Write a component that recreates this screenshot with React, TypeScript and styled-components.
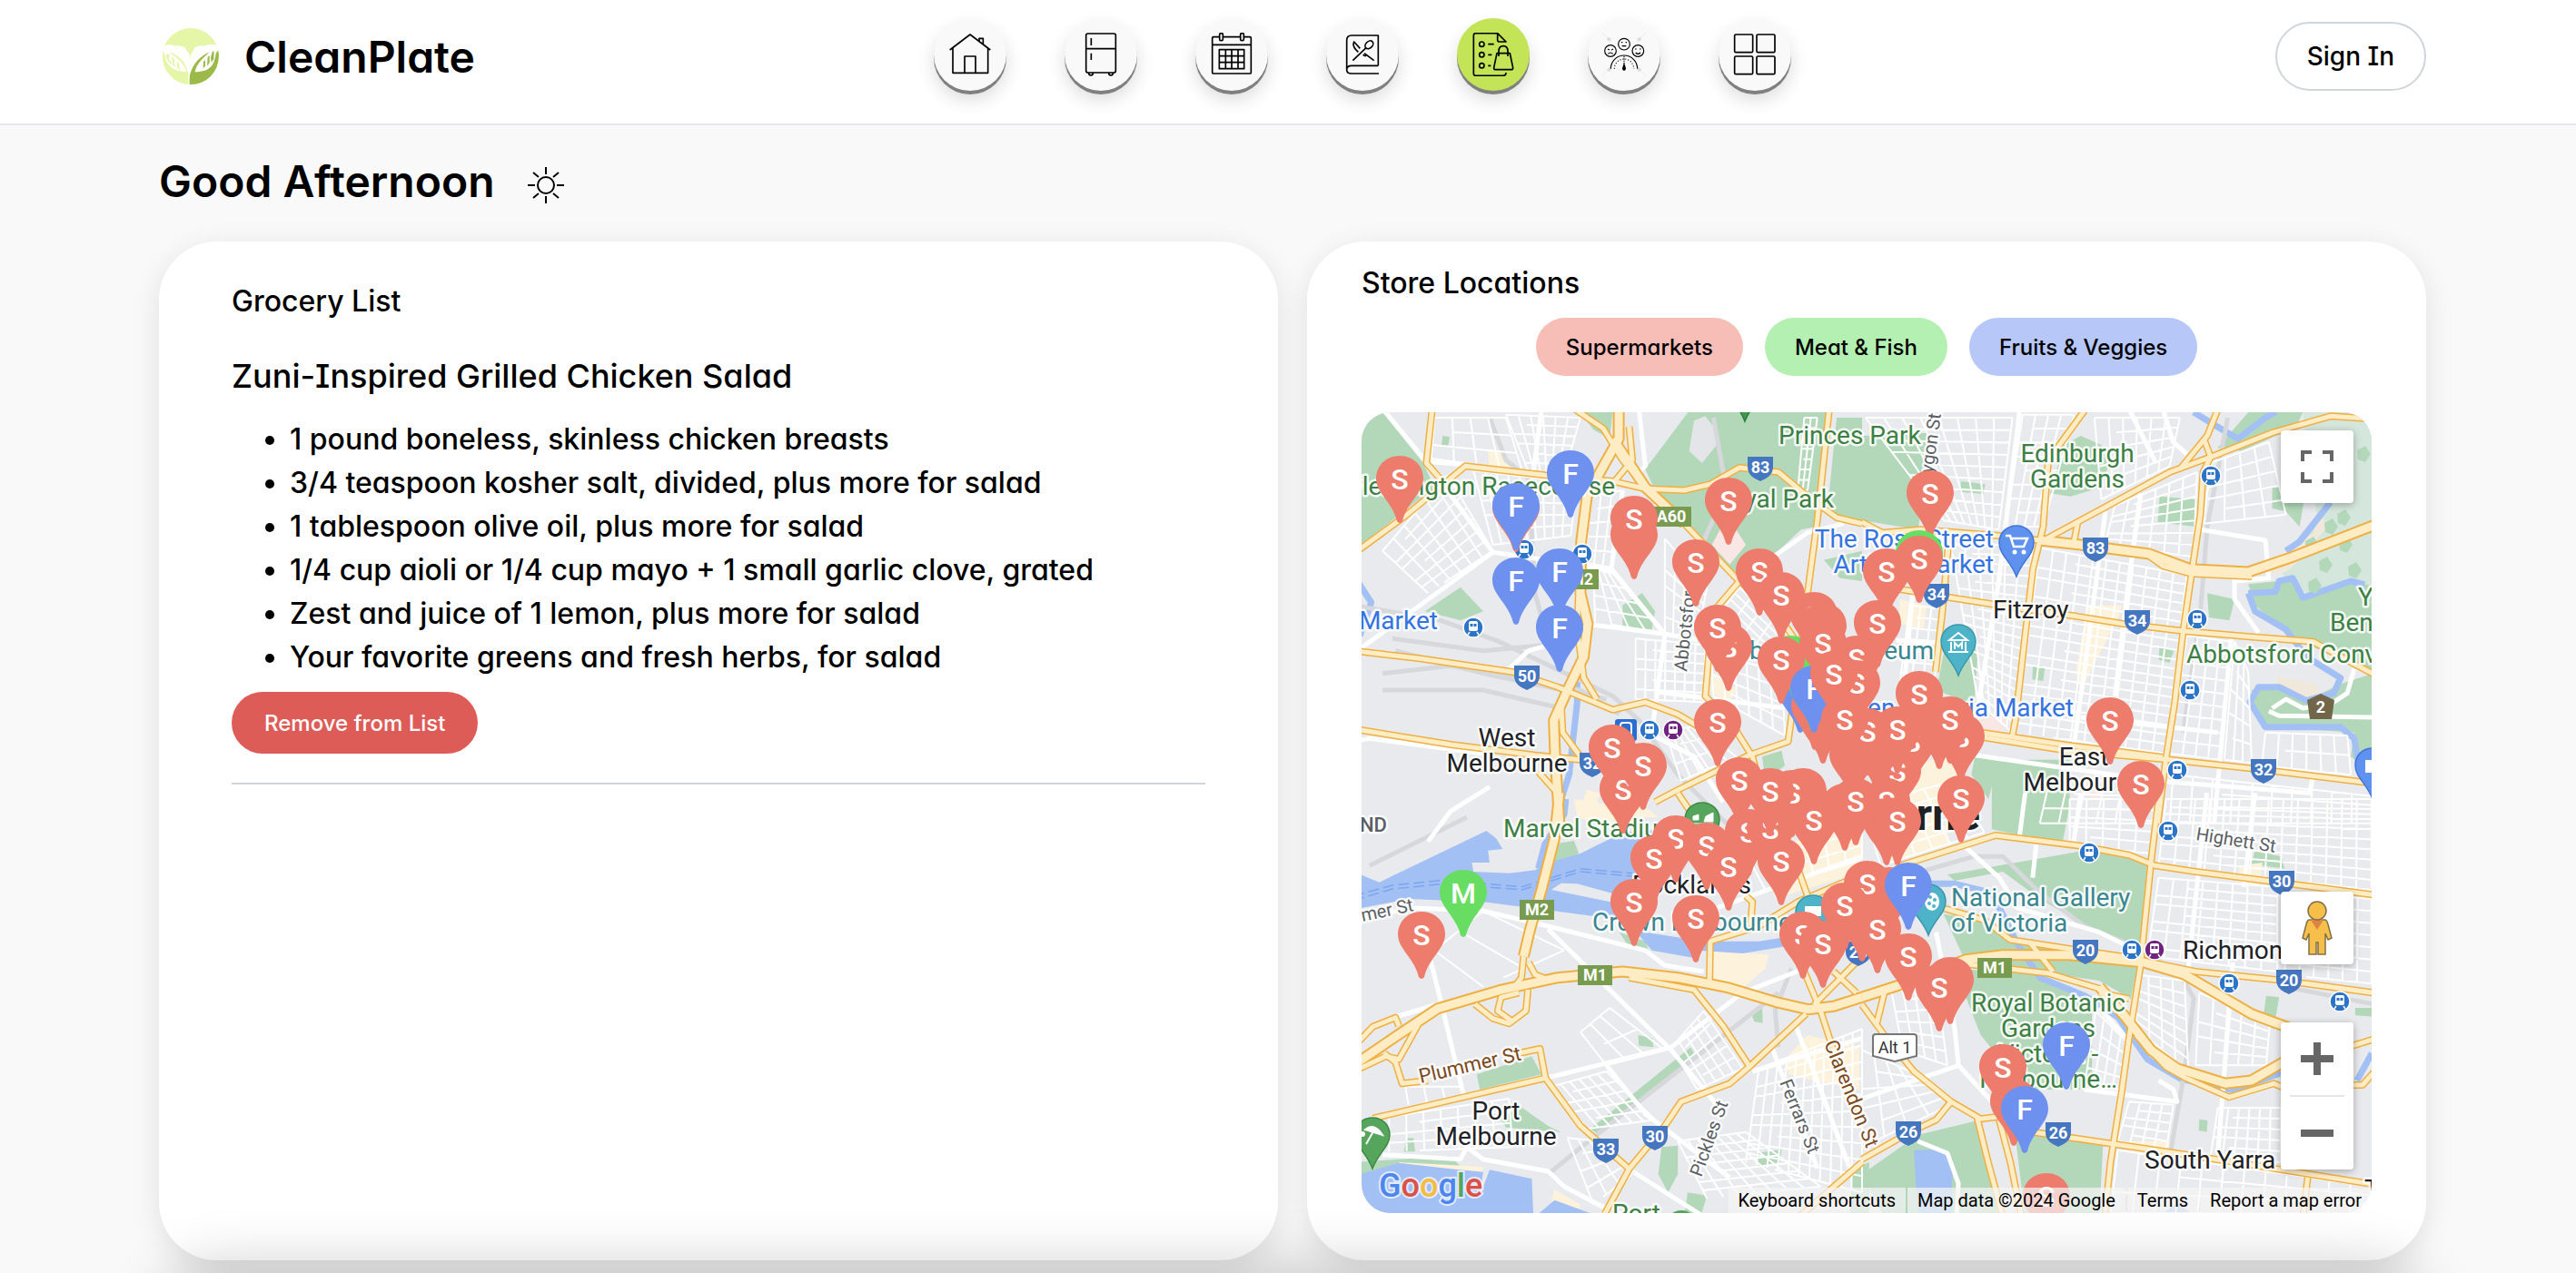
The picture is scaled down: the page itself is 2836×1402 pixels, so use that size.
import React from "react";
import styled, { createGlobalStyle } from "styled-components";

const GlobalStyle = createGlobalStyle`
  *, *::before, *::after { box-sizing: border-box; }
  body {
    margin: 0;
    background: #f9f9f9;
    color: #000;
    font-family: Inter, "Open Sans", sans-serif;
    font-feature-settings: "cv11", "cv08";
    font-weight: 500;
  }
  h1, h2, h3, ul { margin: 0; padding: 0; font-weight: 500; }
  button { font: inherit; font-feature-settings: inherit; color: inherit; cursor: pointer; border: 0; padding: 0; }
  a { color: inherit; text-decoration: none; }
`;

/* ---------- page frame ---------- */

const Header = styled.header`
  display: flex;
  align-items: flex-end;
  justify-content: space-between;
  padding: 20px 165px 36px 175px;
  background: #fff;
  border-bottom: 2px solid #e5e7eb;
`;

const Brand = styled.a`
  display: flex;
  flex: 0 0 320px;
  min-width: 0;
  align-items: center;
  gap: 28px;
  height: 76px;
  padding-left: 4px;
  font-size: 48px;
  font-weight: 600;
  white-space: nowrap;

  svg { flex: none; }
`;

const Nav = styled.nav`
  display: flex;
  gap: 64px;
`;

const NavItem = styled.a<{ $active?: boolean }>`
  display: grid;
  place-items: center;
  width: 80px;
  height: 80px;
  border-radius: 50%;
  background: ${(p) => (p.$active ? "#c3e456" : "#f9f9f9")};
  box-shadow: 0 4px 0 #808080, 0 10px 20px rgba(0, 0, 0, 0.14);
`;

const NavIcon = styled.svg`
  width: 48px;
  height: 48px;
  fill: none;
  stroke: #000;
  stroke-width: 5;
  stroke-linejoin: round;
`;

const SignIn = styled.button`
  height: 76px;
  padding: 0 33px;
  background: #fff;
  border: 2px solid #d1d5db;
  border-radius: 38px;
  font-size: 28px;
`;

const Main = styled.main`
  padding: 0 165px 14px 175px;
`;

const Greeting = styled.div`
  display: flex;
  align-items: center;
  gap: 36px;
  height: 128px;
  padding-top: 4px;
`;

const GreetingTitle = styled.h1`
  font-size: 48px;
  font-weight: 600;
  line-height: 48px;
  padding-bottom: 8px;
`;

const Columns = styled.div`
  display: grid;
  grid-template-columns: 1fr 1fr;
  gap: 32px;
`;

const Card = styled.section<{ $pad: string }>`
  min-width: 0;
  padding: ${(p) => p.$pad};
  background: #fff;
  border-radius: 64px;
  box-shadow: 0 8px 32px rgba(0, 0, 0, 0.1);
`;

const CardTitle = styled.h2`
  font-size: 32px;
  line-height: 40px;
`;

const BottomShade = styled.div`
  position: fixed;
  top: 100%;
  left: 175px;
  right: 165px;
  height: 160px;
  border-radius: 64px;
  box-shadow: 0 -8px 64px rgba(0, 0, 0, 0.2);
  pointer-events: none;
`;

/* ---------- grocery list ---------- */

const RecipeTitle = styled.h3`
  margin-top: 42px;
  font-size: 36px;
  line-height: 40px;
`;

const Ingredients = styled.ul`
  margin: 26px 0 14px;
  padding-left: 64px;
  font-size: 32px;
  line-height: 48px;
`;

const RemoveButton = styled.button`
  height: 68px;
  padding: 0 36px;
  border-radius: 34px;
  background: #de5c58;
  color: #fff;
  font-size: 24px;
`;

const Rule = styled.hr`
  margin: 32px 0 0;
  border: 0;
  border-top: 2px solid #d1d5db;
`;

/* ---------- store map ---------- */

const Filters = styled.div`
  display: flex;
  justify-content: center;
  gap: 24px;
  margin: 18px 0 40px;
`;

const Filter = styled.button<{ $color: string }>`
  height: 64px;
  padding: 0 33px;
  border-radius: 32px;
  background: ${(p) => p.$color};
  font-size: 24px;
`;

const MapFrame = styled.div`
  position: relative;
  aspect-ratio: 1112 / 882;
  overflow: hidden;
  border-radius: 32px;
  background: #e8eaed;
  font-family: Roboto, "Liberation Sans", sans-serif;
  font-feature-settings: normal;
  font-weight: 400;
`;

const MapCanvas = styled.svg`
  display: block;
  width: 100%;
  height: 100%;
`;

const MapControls = styled.div<{ $place: "top" | "bottom" }>`
  position: absolute;
  right: 20px;
  ${(p) => (p.$place === "top" ? "top: 20px;" : "bottom: 48px;")}
  display: flex;
  flex-direction: column;
  gap: 64px;
`;

const MapButton = styled.button`
  display: grid;
  place-items: center;
  width: 80px;
  height: 80px;
  background: #fff;
  border-radius: 4px;
  box-shadow: 0 2px 8px rgba(0, 0, 0, 0.3);
`;

const ZoomGroup = styled.div`
  display: flex;
  flex-direction: column;
  align-items: center;
  background: #fff;
  border-radius: 4px;
  box-shadow: 0 2px 8px rgba(0, 0, 0, 0.3);

  button { box-shadow: none; }
`;

const ZoomDivider = styled.span`
  width: 60px;
  height: 2px;
  background: #e6e6e6;
`;

const MapCredits = styled.div`
  position: absolute;
  right: 0;
  bottom: 0;
  display: flex;
  gap: 2px;
  height: 28px;
  font-size: 20px;
  line-height: 28px;

  a, button, span {
    padding: 0 11px;
    background: rgba(245, 245, 245, 0.72);
    font-family: inherit;
    font-weight: 400;
    line-height: 28px;
  }
`;

/* ---------- map data ---------- */

type Tile = "nw" | "ne" | "sw" | "se";
type Line = [Tile, string];
type Point = [number, number];

/* Each survey tile has its origin and its horizontal and vertical density. */
const tiles: Record<Tile, [number, number, number, number]> = {
  nw: [1490, 440, 2.8, 3],
  ne: [2050, 440, 2.6576, 3],
  sw: [1490, 880, 2.8, 3],
  se: [2050, 880, 2.45, 3],
};

const project = (tile: Tile, [x, y]: Point): Point => {
  const [ox, oy, sx, sy] = tiles[tile];
  return [Math.round((ox + x / sx) * 10) / 10, Math.round((oy + y / sy) * 10) / 10];
};

const points = ([tile, raw]: Line) =>
  raw
    .split(" ")
    .map((pair) => project(tile, pair.split(",").map(Number) as Point).join(","))
    .join(" ");

const motorways: Line[] = [
  ["nw", "818,30 818,130 760,240 720,320 702,470 700,640 722,740 710,850 660,960 618,1060 622,1180 635,1400"],
  ["sw", "635,-20 620,130 580,300 545,430 525,520"],
  ["sw", "0,880 130,785 260,692 450,632 630,590 830,570 1000,590 1150,622 1300,670 1400,695 1480,685 1568,655"],
  ["se", "0,655 100,615 280,530 380,515 560,515 760,540 870,580 1050,710 1150,755"],
  ["ne", "520,465 640,480 840,510 960,560 1130,570 1260,520 1510,410"],
  ["se", "640,620 710,720 780,830 850,890 980,940 1050,930 1150,860"],
  ["nw", "800,130 850,210 900,290 1020,410"],
];

const highways: Line[] = [
  ["nw", "680,30 770,95 830,200 900,290 1020,410 1180,590 1290,690 1340,760 1390,840"],
  ["nw", "0,510 160,385 345,220 590,250 800,270 900,295 1020,300 1100,280 1190,225 1310,240 1400,320 1490,390 1568,410"],
  ["nw", "243,30 225,210 290,290"],
  ["nw", "0,830 200,855 490,900 630,950 800,1025 900,1000 1000,1040 1110,1110"],
  ["nw", "0,1088 300,1140 560,1175 700,1190 760,1200"],
  ["nw", "1467,30 1430,400 1400,640 1370,900 1340,1130 1220,1175 1000,1290 930,1330"],
  ["nw", "1190,600 1110,700 1095,850 1085,980 1160,1060 1230,1180 1250,1260"],
  ["nw", "850,90 860,200 790,290"],
  ["nw", "695,620 690,760 710,920 750,990"],
  ["nw", "640,1000 645,1100 700,1180"],
  ["nw", "1000,1300 1050,1380"],
  ["nw", "570,1230 620,1290"],
  ["ne", "655,30 545,200 530,420 500,560 475,800 450,1050 440,1110"],
  ["ne", "0,405 60,440 170,430 400,450 520,465"],
  ["ne", "540,460 720,350 900,240 1020,190 1200,110 1370,55 1510,65"],
  ["ne", "1042,30 1010,120 930,230"],
  ["ne", "1000,130 1020,190 998,240 990,380 970,530 940,760 915,1000 890,1180 865,1400"],
  ["ne", "632,400 620,470"],
  ["ne", "820,500 880,550 960,575 1140,585"],
  ["ne", "100,625 260,655 460,690 620,715 760,740 940,765 1150,785 1320,800 1400,850 1510,915"],
  ["ne", "255,450 235,700 215,900"],
  ["ne", "350,1115 600,1160 900,1190 1150,1220 1510,1270"],
  ["ne", "350,1100 600,1142 880,1182"],
  ["sw", "0,820 60,752 130,722 140,750"],
  ["sw", "0,900 100,850 140,860 200,745"],
  ["sw", "95,840 130,870 150,940 230,930"],
  ["sw", "525,520 518,590 500,615"],
  ["sw", "540,540 560,580 610,600"],
  ["sw", "538,630 532,700 480,742 430,725 375,678"],
  ["sw", "510,640 455,655 445,700 490,735"],
  ["sw", "510,840 575,825 592,922 60,1055"],
  ["sw", "592,922 700,1080 850,1222"],
  ["sw", "1395,710 1220,885 1160,940 1010,1000 960,1080 850,1222 775,1370"],
  ["sw", "850,590 1050,630 1140,750 1225,890"],
  ["sw", "1098,600 1100,470 1250,420 1370,340 1568,250"],
  ["sw", "1210,320 1230,340 1225,410"],
  ["sw", "1370,230 1400,320"],
  ["sw", "1390,570 1440,700 1480,830 1560,1040"],
  ["sw", "1568,520 1420,680"],
  ["sw", "1480,570 1550,640"],
  ["sw", "1568,1200 1380,1375"],
  ["se", "280,545 500,575 650,630"],
  ["se", "740,780 820,885 870,920 990,985 1110,940 1150,960"],
  ["se", "90,225 360,120 590,155 720,185 790,220 900,240 1090,270 1390,318"],
  ["se", "802,-20 780,200 750,560 720,790 700,970 670,1200 655,1380"],
  ["se", "190,350 330,400 400,465 560,495 700,520 900,570 1140,600 1390,642"],
  ["se", "450,470 515,570"],
  ["se", "1310,820 1390,790"],
  ["se", "1310,945 1350,945 1390,890"],
  ["se", "0,680 60,780 140,900 240,1000 320,1057 400,1045"],
  ["se", "310,1050 340,1200 380,1380"],
  ["se", "370,1060 400,1200 430,1380"],
  ["se", "240,1000 200,1060 130,1100 0,1190"],
  ["se", "460,1100 680,1140 900,1180 1390,1275"],
  ["se", "1202,1250 1190,1380"],
  ["se", "60,640 40,740"],
  ["se", "640,640 720,660"],
];

const streets: Line[] = [
  ["nw", "90,30 220,200 430,505 720,550 800,565 960,775 1060,795"],
  ["nw", "0,840 430,505"],
  ["nw", "740,745 960,775 925,1060"],
  ["nw", "580,30 555,240"],
  ["nw", "880,30 900,220 860,260"],
  ["nw", "830,300 795,560"],
  ["nw", "220,205 345,215"],
  ["nw", "930,965 1330,1020"],
  ["nw", "480,890 540,830 640,800"],
  ["nw", "890,1090 1050,1180 1140,1330"],
  ["nw", "1280,530 1400,440 1510,410"],
  ["nw", "0,1130 50,1120 400,1170"],
  ["ne", "462,30 400,600 340,1010"],
  ["ne", "815,310 780,600 740,980"],
  ["ne", "712,370 650,900 620,1140"],
  ["ne", "780,30 860,210"],
  ["ne", "880,30 910,140 950,180"],
  ["ne", "990,430 1180,465 1190,590 1090,600 1090,660 1160,770"],
  ["ne", "1080,790 1030,1400"],
  ["ne", "640,1050 1040,1100"],
  ["ne", "330,1175 860,1260 1310,1300 1320,1240"],
  ["ne", "1440,890 1420,970 1380,1000"],
  ["ne", "1200,1020 1240,990 1290,1020 1380,1005"],
  ["ne", "1190,1030 1220,1045 1491,1050"],
  ["ne", "100,795 240,805"],
  ["ne", "150,620 120,980"],
  ["sw", "0,400 180,360 400,370 600,420 900,500 960,550 1080,570"],
  ["sw", "600,430 980,830 1120,1010"],
  ["sw", "230,500 270,670 340,980"],
  ["sw", "600,920 980,820 1200,640 1390,560"],
  ["sw", "130,720 280,672"],
  ["sw", "780,880 900,1040 1160,1250"],
  ["sw", "90,1175 330,1190 350,1150 400,1190 600,1230 650,1280 790,1360"],
  ["sw", "1230,900 1568,790"],
  ["sw", "1360,740 1440,960 1530,1220"],
  ["sw", "1290,820 1430,1220"],
  ["sw", "860,1230 1080,1380"],
  ["sw", "1120,360 1568,190"],
  ["sw", "230,140 300,40 420,-40"],
  ["se", "200,440 250,760 260,880 350,1000"],
  ["se", "280,160 370,260 420,360 640,440 740,500"],
  ["se", "600,960 850,1000 840,960 800,930"],
  ["se", "640,690 720,800"],
  ["se", "150,1130 230,1170 260,1270 255,1380"],
  ["se", "1000,540 960,1170"],
  ["se", "0,990 260,880"],
  ["se", "440,-20 425,120"],
  ["se", "590,-20 570,150"],
  ["se", "470,150 460,260"],
  ["se", "930,-20 880,560"],
  ["se", "1060,-20 1030,290"],
];

const railways: Line[] = [
  ["nw", "0,680 270,730 450,800 800,980 880,1060 1000,1240 1150,1400"],
  ["nw", "90,905 300,880 700,960 820,1040"],
  ["nw", "120,790 400,830 700,800"],
  ["nw", "90,960 400,960 640,1020"],
  ["nw", "130,830 420,910 780,990"],
  ["nw", "420,60 470,200 540,260 560,640 600,800"],
  ["nw", "1110,60 1150,300 1040,560"],
  ["ne", "1070,60 1010,420 990,700 940,1100"],
  ["sw", "50,220 350,60"],
  ["sw", "1350,560 1300,700 1310,820"],
  ["sw", "1310,640 760,1100 600,1240"],
  ["se", "130,250 300,190 380,190 480,310 600,420 740,490 860,580 895,660 870,900 830,1180"],
  ["se", "1140,620 1390,680"],
];

const parks: Line[] = [
  ["nw", "0,42 90,42 215,210 250,290 190,340 0,500"],
  ["nw", "900,230 1040,30 1460,30 1425,420 1380,430 1280,530 1195,590 930,300"],
  ["nw", "1490,60 1568,60 1568,400 1460,380"],
  ["nw", "690,30 800,30 790,130 740,100"],
  ["nw", "220,700 330,620 400,700 330,730"],
  ["nw", "830,680 890,640 930,700 920,760 830,750"],
  ["nw", "1260,1180 1320,1160 1330,1210 1270,1260"],
  ["nw", "275,120 297,124 292,154 272,150"],
  ["nw", "1450,530 1568,500 1568,600 1500,590"],
  ["ne", "0,120 190,110 165,430 0,400"],
  ["ne", "590,150 640,120 700,150 720,220 700,290 610,320 550,310"],
  ["ne", "870,320 980,330 975,420 865,405"],
  ["ne", "240,830 340,820 328,1010 218,960"],
  ["ne", "1130,42 1290,42 1270,90 1110,170 1040,160"],
  ["ne", "1200,290 1300,290 1280,420 1240,370 1200,360"],
  ["ne", "1010,640 1090,660 1075,730 1015,720"],
  ["ne", "870,815 912,830 900,870 868,860"],
  ["ne", "500,880 535,885 530,930 498,925"],
  ["ne", "1130,610 1220,600 1260,590 1290,660 1430,600 1510,620 1510,920 1400,860 1250,780 1150,680"],
  ["ne", "1140,960 1220,950 1310,990 1400,940 1510,900 1510,1250 1430,1180 1440,1100 1180,1080 1140,1010"],
  ["ne", "330,1180 400,1190 370,1320 320,1240"],
  ["ne", "290,270 360,280 355,312 285,305"],
  ["sw", "380,910 550,850 580,910 390,960"],
  ["sw", "730,1090 1040,820 1055,850 760,1110"],
  ["sw", "610,150 680,138 695,180 620,220"],
  ["sw", "450,1050 520,1020 600,1080 640,1100 470,1085"],
  ["sw", "0,1200 300,1180 340,1225 0,1245"],
  ["sw", "950,1150 1000,1145 1000,1240 970,1300 940,1240"],
  ["sw", "1240,1170 1320,1158 1315,1200 1250,1212"],
  ["sw", "1030,1300 1090,1310 1070,1380 1020,1380"],
  ["sw", "1540,1220 1590,1200 1590,1380 1530,1380"],
  ["sw", "878,780 920,790 925,820 880,815"],
  ["sw", "1225,700 1260,690 1262,740 1235,735"],
  ["sw", "820,440 900,470 910,500 850,490"],
  ["sw", "165,1120 185,1120 190,1165 155,1165"],
  ["se", "350,-130 560,-130 560,20 540,150 350,100"],
  ["se", "230,250 600,170 770,200 750,500 620,430 480,330 380,240 250,270"],
  ["se", "220,380 330,400 400,470 745,540 725,660 640,600 400,560 280,540"],
  ["se", "250,560 480,580 620,650 620,960 440,960 320,780"],
  ["se", "150,1110 320,1060 350,1240 380,1380 60,1380 0,1240"],
  ["se", "410,1080 460,1110 650,1140 640,1380 440,1380"],
  ["se", "1090,650 1125,655 1110,760 1080,740"],
  ["se", "1330,690 1390,690 1390,720 1330,715"],
  ["se", "910,1058 932,1062 930,1100 908,1095"],
  ["se", "1060,170 1130,190 1140,230 1050,215"],
];

const heath: Line[] = [
  ["ne", "1290,42 1510,42 1510,640 1300,640 1230,580 1230,520 1330,380"],
];

const sand: Line[] = [
  ["nw", "415,165 470,180 500,250 420,240"],
  ["nw", "720,1290 760,1300 740,1380 700,1350"],
  ["nw", "880,1330 940,1380 860,1380"],
  ["nw", "1110,900 1180,960 1150,1010 1100,960"],
  ["ne", "110,660 190,680 180,760 110,740"],
  ["ne", "660,680 760,680 750,720 640,960 625,900"],
  ["ne", "130,1200 300,1180 260,1380 100,1380"],
  ["sw", "1110,500 1280,515 1270,560 1180,645 1110,595"],
  ["sw", "680,0 800,20 840,140 780,90 690,60"],
  ["sw", "1330,860 1400,780 1560,820 1560,960 1420,930 1340,910"],
  ["sw", "1260,180 1568,60 1568,240 1300,330"],
  ["sw", "140,1200 400,1215 395,1240 150,1212"],
  ["sw", "620,1290 700,1340 690,1380 610,1330"],
  ["se", "1020,220 1080,210 1070,290 1010,270"],
  ["se", "0,60 200,0 240,150 60,210"],
  ["se", "720,1130 840,1130 830,1180 720,1160"],
];

const water: Line[] = [
  ["sw", "0,240 80,275 410,105 440,130 460,165 415,170 420,210 365,210 370,240 480,245 560,235 600,210 700,180 830,110 960,100 960,250 900,290 850,400 760,390 620,370 400,340 170,330 0,365"],
  ["sw", "840,400 900,440 1080,470 1250,470 1370,450 1370,480 1200,510 1060,500 1050,525 920,500"],
  ["sw", "0,1245 140,1202 300,1222 400,1232 390,1310 420,1225 550,1255 555,1380 0,1380"],
  ["sw", "560,1380 620,1325 760,1380"],
  ["se", "140,1160 210,1158 245,1190 240,1380 150,1380"],
  ["se", "800,1380 850,1335 900,1380"],
];

const rivers: Line[] = [
  ["nw", "620,1390 665,1240 690,1000 690,900"],
  ["sw", "655,0 650,50 590,150 570,230"],
  ["nw", "0,580 55,670 20,780"],
  ["ne", "970,42 1040,90 1100,130 1180,60 1210,42"],
  ["ne", "1130,640 1210,635 1220,600 1260,590 1290,655 1430,600 1470,612"],
  ["ne", "1130,640 1150,700 1240,760 1300,850 1400,920 1380,970 1300,995 1220,950 1160,950 1135,1000 1180,1082 1400,1082 1440,1120 1455,1220"],
  ["se", "180,280 250,280 350,310 420,480 480,590 600,650 690,720 770,860 860,925 1000,962 1130,905"],
  ["se", "1335,930 1375,840"],
  ["ne", "1370,340 1280,470 1240,500"],
];

/* Street blocks: four corners and the count of lines each way. */
const blocks: [Tile, Point, Point, Point, Point, number, number][] = [
  ["nw", [250, 60], [470, 60], [520, 235], [240, 195], 4, 3],
  ["nw", [470, 50], [700, 60], [650, 245], [540, 240], 6, 6],
  ["nw", [370, 235], [690, 275], [670, 450], [430, 480], 9, 5],
  ["nw", [90, 500], [290, 250], [430, 500], [230, 640], 6, 7],
  ["nw", [730, 320], [830, 300], [795, 555], [715, 540], 3, 5],
  ["nw", [740, 560], [800, 575], [950, 770], [745, 735], 4, 4],
  ["nw", [960, 460], [1090, 620], [1060, 790], [960, 770], 4, 6],
  ["nw", [870, 790], [1085, 810], [1080, 1000], [870, 990], 7, 6],
  ["nw", [1100, 800], [1320, 850], [1330, 1110], [1110, 980], 6, 5],
  ["nw", [1390, 60], [1430, 60], [1400, 300], [1370, 300], 2, 7],
  ["nw", [1120, 720], [1190, 620], [1360, 800], [1300, 900], 5, 5],
  ["nw", [960, 1090], [1060, 1080], [1180, 1180], [1010, 1260], 6, 3],
  ["ne", [10, 60], [440, 60], [400, 430], [240, 400], 8, 9],
  ["ne", [470, 50], [620, 50], [530, 420], [420, 420], 4, 8],
  ["ne", [680, 60], [930, 60], [900, 220], [700, 330], 6, 5],
  ["ne", [740, 350], [980, 240], [970, 520], [710, 480], 6, 7],
  ["ne", [260, 480], [500, 480], [440, 1100], [340, 1000], 6, 18],
  ["ne", [520, 490], [950, 580], [890, 1170], [450, 1100], 11, 19],
  ["ne", [1020, 210], [1190, 140], [1240, 380], [1000, 410], 4, 5],
  ["ne", [950, 780], [1080, 800], [1050, 1190], [900, 1170], 4, 9],
  ["ne", [1090, 800], [1130, 900], [1140, 1200], [1060, 1190], 3, 5],
  ["ne", [1180, 1100], [1420, 1110], [1430, 1240], [1170, 1210], 6, 2],
  ["ne", [550, 1250], [870, 1270], [850, 1400], [520, 1400], 6, 3],
  ["ne", [910, 1240], [1491, 1310], [1491, 1400], [900, 1400], 10, 3],
  ["ne", [140, 680], [235, 690], [210, 950], [110, 940], 3, 7],
  ["sw", [1250, 890], [1568, 760], [1568, 1300], [1210, 1200], 11, 10],
  ["sw", [1000, 1130], [1210, 1100], [1440, 1280], [1090, 1320], 7, 7],
  ["sw", [700, 770], [790, 690], [960, 830], [780, 880], 3, 2],
  ["sw", [610, 950], [780, 900], [930, 1060], [720, 1090], 6, 5],
  ["sw", [660, 1120], [760, 1130], [860, 1240], [740, 1340], 3, 4],
  ["sw", [980, 820], [1080, 700], [1200, 890], [1060, 960], 5, 5],
  ["sw", [110, 1050], [480, 990], [490, 1150], [110, 1165], 7, 4],
  ["sw", [160, 950], [330, 950], [340, 990], [170, 1010], 3, 1],
  ["sw", [250, 500], [400, 370], [650, 500], [400, 620], 2, 1],
  ["sw", [1270, 300], [1568, 200], [1568, 60], [1200, 160], 6, 3],
  ["se", [560, 0], [790, 0], [780, 180], [560, 150], 5, 5],
  ["se", [820, 0], [1374, 0], [1374, 300], [800, 220], 14, 9],
  ["se", [800, 260], [1120, 290], [1120, 570], [770, 520], 8, 9],
  ["se", [1150, 310], [1374, 330], [1374, 610], [1140, 580], 6, 7],
  ["se", [740, 580], [870, 600], [880, 900], [740, 760], 4, 7],
  ["se", [910, 640], [1100, 740], [1090, 880], [900, 880], 5, 5],
  ["se", [630, 700], [720, 810], [700, 960], [600, 950], 4, 4],
  ["se", [720, 1000], [840, 1010], [820, 1160], [690, 1130], 4, 5],
  ["se", [960, 1020], [1130, 1020], [1130, 1200], [940, 1180], 6, 5],
  ["se", [690, 1160], [1374, 1280], [1374, 1368], [670, 1368], 12, 3],
  ["se", [0, 830], [130, 900], [240, 1010], [0, 1150], 4, 5],
  ["se", [80, 640], [200, 600], [230, 880], [110, 830], 4, 6],
  ["se", [0, 20], [250, -60], [330, 110], [50, 220], 6, 5],
];

const blockPath = ([tile, a, b, c, d, nx, ny]: (typeof blocks)[number]) => {
  const mix = (p: Point, q: Point, t: number): Point => [p[0] + (q[0] - p[0]) * t, p[1] + (q[1] - p[1]) * t];
  const seg = (p: Point, q: Point) => `M${project(tile, p)}L${project(tile, q)}`;
  let path = "";
  for (let i = 0; i <= nx; i++) path += seg(mix(a, b, i / nx), mix(d, c, i / nx));
  for (let j = 0; j <= ny; j++) {
    const trim = (j * 7) % 3 === 1 ? 0.25 : 0;
    const left = mix(a, d, j / ny);
    const right = mix(b, c, j / ny);
    path += seg(mix(left, right, trim), right);
  }
  return path;
};

const green = "#3c8043";
const teal = "#38868f";
const blue = "#3474e0";
const ink = "#202124";
const grey = "#5b5f64";
const brown = "#7b4a1c";

type Label = { t: string; x: number; y: number; c: string; a?: "start" | "middle" | "end"; s?: number; w?: number; r?: number };

const labels: Label[] = [
  { t: "Flemington Racecourse", x: 1778, y: 545, c: green, a: "end" },
  { t: "Princes Park", x: 1958, y: 489, c: green },
  { t: "Royal Park", x: 2019, y: 559, c: green, a: "end" },
  { t: "The Rose Street", x: 2195, y: 603, c: blue, a: "end" },
  { t: "Artists Market", x: 2195, y: 631, c: blue, a: "end" },
  { t: "Edinburgh", x: 2287, y: 509, c: green, a: "middle" },
  { t: "Gardens", x: 2287, y: 537, c: green, a: "middle" },
  { t: "Fitzroy", x: 2194, y: 681, c: ink },
  { t: "Melbourne Museum", x: 2129, y: 726, c: teal, a: "end" },
  { t: "Queen Victoria Market", x: 2283, y: 789, c: blue, a: "end" },
  { t: "Abbotsford Convent", x: 2407, y: 730, c: green },
  { t: "Yarra", x: 2596, y: 667, c: green },
  { t: "Bend", x: 2565, y: 695, c: green },
  { t: "Market", x: 1583, y: 693, c: blue, a: "end" },
  { t: "West", x: 1659, y: 822, c: ink, a: "middle" },
  { t: "Melbourne", x: 1659, y: 850, c: ink, a: "middle" },
  { t: "East", x: 2294, y: 843, c: ink, a: "middle" },
  { t: "Melbourne", x: 2294, y: 871, c: ink, a: "middle" },
  { t: "Melbourne", x: 2180, y: 914, c: ink, a: "end", s: 48, w: 700 },
  { t: "Marvel Stadium", x: 1655, y: 922, c: green },
  { t: "Docklands", x: 1928, y: 984, c: ink, a: "end" },
  { t: "Crown Melbourne", x: 1753, y: 1025, c: teal },
  { t: "National Gallery", x: 2148, y: 998, c: teal },
  { t: "of Victoria", x: 2148, y: 1026, c: teal },
  { t: "Royal Botanic", x: 2255, y: 1114, c: green, a: "middle" },
  { t: "Gardens", x: 2255, y: 1142, c: green, a: "middle" },
  { t: "Victoria -", x: 2255, y: 1170, c: green, a: "middle" },
  { t: "Melbourne…", x: 2255, y: 1198, c: green, a: "middle" },
  { t: "Richmond", x: 2403, y: 1056, c: ink },
  { t: "South Yarra", x: 2361, y: 1287, c: ink },
  { t: "Toorak", x: 2603, y: 1319, c: ink },
  { t: "Port", x: 1647, y: 1233, c: ink, a: "middle" },
  { t: "Melbourne", x: 1647, y: 1261, c: ink, a: "middle" },
  { t: "Port", x: 1775, y: 1346, c: green },
  { t: "ND", x: 1527, y: 916, c: grey, a: "end", s: 22, w: 500 },
  { t: "Plummer St", x: 1564, y: 1193, c: brown, s: 22, r: -13 },
  { t: "Plummer St", x: 1557, y: 1003, c: grey, s: 20, r: -12, a: "end" },
  { t: "Pickles St", x: 1873, y: 1297, c: grey, s: 20, r: -70 },
  { t: "Ferrars St", x: 1959, y: 1192, c: grey, s: 20, r: 68 },
  { t: "Clarendon St", x: 2008, y: 1149, c: brown, s: 22, r: 68 },
  { t: "Abbotsford St", x: 1857, y: 740, c: grey, s: 20, r: -84 },
  { t: "Lygon St", x: 2137, y: 456, c: grey, s: 20, r: -82, a: "end" },
  { t: "Highett St", x: 2417, y: 925, c: grey, s: 20, r: 9 },
];

const shields: [string, number, number][] = [
  ["83", 1938, 516], ["50", 1681, 746], ["32", 1753, 842], ["83", 2307, 605], ["34", 2132, 656],
  ["34", 2353, 685], ["32", 2492, 849], ["30", 2512, 972], ["20", 2296, 1048], ["20", 2520, 1081],
  ["26", 2101, 1248], ["26", 2266, 1249], ["33", 1768, 1267], ["30", 1822, 1253], ["20", 2046, 1050],
];

const routeSigns: [string, number, number][] = [
  ["A60", 1840, 569], ["M2", 1741, 638], ["M2", 1692, 1002], ["M1", 1756, 1074], ["M1", 2196, 1066],
];

const stations: [number, number, string][] = [
  [1678, 605, "#2b74c7"], [1742, 610, "#2b74c7"], [1622, 691, "#2b74c7"], [1816, 804, "#2b74c7"],
  [1842, 804, "#6f2380"], [2434, 524, "#2b74c7"], [2419, 682, "#2b74c7"], [2411, 760, "#2b74c7"],
  [2397, 848, "#2b74c7"], [2387, 915, "#2b74c7"], [2300, 939, "#2b74c7"], [2347, 1046, "#2b74c7"],
  [2372, 1046, "#6f2380"], [2454, 1083, "#2b74c7"], [2576, 1103, "#2b74c7"],
];

const pinColors = { S: "#ed7c6c", F: "#6e91ef", M: "#67dd62" };
type Kind = keyof typeof pinColors;

/* Pins in stacking order: kind, centre, top, and whether its letter is hidden by others. */
const pins: [Kind, number, number, boolean?][] = [
  ["S", 1669, 534, true], ["S", 1541, 502], ["F", 1729, 496], ["F", 1669, 532], ["F", 1669, 614],
  ["F", 1717, 604], ["F", 1717, 666], ["S", 1799, 564, true], ["S", 1799, 546], ["S", 1903, 526],
  ["S", 1867, 594], ["S", 1937, 604], ["S", 1961, 630], ["S", 1997, 652], ["S", 2007, 664, true],
  ["S", 2125, 518], ["M", 2113, 584, true], ["S", 2077, 604], ["S", 2113, 590], ["S", 2067, 661],
  ["S", 1903, 687], ["S", 1891, 666], ["S", 1891, 770], ["M", 1971, 700, true],
  ["S", 2044, 700], ["S", 2044, 727], ["M", 1990, 728, true], ["F", 1982, 733, true], ["S", 2007, 767],
  ["S", 1998, 752, true], ["M", 1996, 731, true], ["S", 1961, 701], ["F", 1997, 733], ["S", 2007, 683], ["S", 2019, 717],
  ["S", 2113, 739], ["S", 2105, 791], ["S", 2135, 773, true], ["S", 2159, 786], ["S", 2147, 767],
  ["S", 2089, 824], ["S", 2067, 798, true], ["S", 2040, 806, true], ["S", 2089, 778], ["S", 2056, 780],
  ["S", 2031, 767], ["S", 2323, 768], ["S", 2357, 838], ["S", 2159, 854], ["S", 2077, 857],
  ["S", 2077, 879, true], ["S", 2031, 863, true], ["S", 2043, 857], ["S", 2089, 879],
  ["S", 1985, 846, true], ["S", 1973, 848], ["S", 1925, 891], ["S", 1949, 887], ["S", 1949, 846],
  ["S", 1915, 834], ["S", 1997, 878], ["S", 1961, 923], ["S", 1845, 898], ["S", 1879, 906],
  ["S", 1903, 929], ["S", 1821, 920], ["S", 1799, 968], ["S", 1867, 986], ["S", 1787, 844],
  ["S", 1809, 818], ["S", 1775, 798], ["M", 1611, 958], ["S", 1565, 1004], ["S", 2080, 955, true],
  ["S", 2056, 948], ["S", 2050, 985, true], ["S", 2031, 972], ["S", 1985, 1004], ["S", 2007, 1014],
  ["S", 2067, 998], ["F", 2101, 950], ["S", 2101, 1028], ["S", 2147, 1054, true], ["S", 2135, 1062],
  ["S", 2217, 1188, true], ["S", 2205, 1150], ["F", 2275, 1126], ["F", 2229, 1196], ["S", 2253, 1292],
];

const Text = styled.text<{ $size?: number; $weight?: number }>`
  font-size: ${(p) => p.$size ?? 28}px;
  font-weight: ${(p) => p.$weight ?? 400};
`;

const HaloText = styled(Text)`
  paint-order: stroke;
  stroke: rgba(255, 255, 255, 0.85);
  stroke-width: 5px;
  stroke-linejoin: round;
`;

const GoogleText = styled.text`
  font-size: 36px;
  font-weight: 500;
  paint-order: stroke;
  stroke: #fff;
  stroke-width: 4px;
  stroke-opacity: 0.7;
`;

const Roads = ({ lines, width, color }: { lines: Line[]; width: number; color: string }) => (
  <g fill="none" stroke={color} strokeWidth={width} strokeLinejoin="round">
    {lines.map((l, i) => <polyline key={i} points={points(l)} />)}
  </g>
);

const Areas = ({ areas, color }: { areas: Line[]; color: string }) => (
  <g fill={color}>{areas.map((a, i) => <polygon key={i} points={points(a)} />)}</g>
);

const StorePin = ({ kind, x, y, covered }: { kind: Kind; x: number; y: number; covered?: boolean }) => (
  <g transform={`translate(${x} ${y})`}>
    <path d="M0 0C15 0 26 11 26 25C26 41 8 51 3 72Q0 76 -3 72C-8 51 -26 41 -26 25C-26 11 -15 0 0 0Z" fill={pinColors[kind]} />
    {!covered && <Text y={37} textAnchor="middle" fill="#fff" $size={32} $weight={500}>{kind}</Text>}
  </g>
);

const PlacePin = ({ x, y, fill, edge, children }: { x: number; y: number; fill: string; edge: string; children?: React.ReactNode }) => (
  <g transform={`translate(${x} ${y})`}>
    <path d="M0 1C11 1 19 9 19 20C19 33 6 40 0 57C-6 40 -19 33 -19 20C-19 9 -11 1 0 1Z" fill={fill} stroke={edge} strokeWidth="1.5" />
    {children}
  </g>
);

const StoreMap = () => (
  <MapCanvas viewBox="1499 454 1112 882" preserveAspectRatio="xMidYMid slice" role="img" aria-label="Map of stores around Melbourne">
    <rect x="1499" y="454" width="1112" height="882" fill="#e8eaed" />
    <Areas areas={heath} color="#d5e6dc" />
    <Areas areas={parks} color="#b3d8b9" />
    <polygon points={points(["nw", "1050,70 1085,55 1110,90 1120,150 1075,210 1035,170"])} fill="#e3e5e8" />
    <polygon points={points(["nw", "1130,430 1180,430 1210,480 1160,545 1105,480"])} fill="#f8e7e5" />
    <Areas areas={sand} color="#fdf3dc" />
    <polygon points={points(["ne", "1340,370 1360,420 1290,520 1240,570 1190,580 1240,500 1320,440"])} fill="#f0e8da" />
    <polygon points={points(["ne", "1215,915 1330,940 1340,980 1290,1000 1210,945"])} fill="#f0e8da" />
    <polygon points={points(["ne", "340,1040 420,1060 410,1110 340,1090"])} fill="#f8e7e5" />
    <polygon points={points(["ne", "650,1230 720,1260 690,1330 655,1310"])} fill="#f8e7e5" />
    <Areas areas={water} color="#a3c0f4" />
    <Roads lines={rivers} width={7} color="#a3c0f4" />
    <g fill="#b3d8b9">
      {[[2545, 600], [2560, 622], [2548, 645], [2582, 600], [2592, 628], [2580, 570], [2602, 500], [2566, 580]].map(([x, y]) => (
        <polygon key={`${x}-${y}`} points={`${x - 7},${y - 4} ${x + 2},${y - 9} ${x + 8},${y} ${x + 2},${y + 9} ${x - 6},${y + 6}`} />
      ))}
    </g>
    <Roads lines={railways} width={5} color="#d6d8dc" />
    <polyline points={points(["sw", "0,320 120,285 280,268 520,290 700,230 860,245"])} fill="none" stroke="#7ba5ee" strokeWidth="1.5" strokeDasharray="12 5" />
    <polyline points={points(["sw", "0,335 120,297 280,280 520,300 700,240 860,255"])} fill="none" stroke="#7ba5ee" strokeWidth="1.5" strokeDasharray="12 5" />
    <polygon points={points(["sw", "640,278 690,280 860,330 840,350 610,300"])} fill="#e8eaed" />
    <path d={blocks.map(blockPath).join("")} fill="none" stroke="#fff" strokeWidth="2" />
    <Roads lines={streets} width={5} color="#fff" />
    <Roads lines={highways} width={8} color="#efb043" />
    <Roads lines={motorways} width={13} color="#efb043" />
    <Roads lines={highways} width={5} color="#fdecc4" />
    <Roads lines={motorways} width={9} color="#fdecc4" />

    {stations.map(([x, y, fill]) => (
      <g key={`${x}-${y}`} transform={`translate(${x} ${y})`}>
        <circle r="11" fill={fill} stroke="#fff" strokeWidth="1.5" />
        <rect x="-5" y="-7" width="10" height="11" rx="2" fill="#fff" />
        <path d="M-3.500-4h3v3h-3zM.5-4h3v3h-3z" fill={fill} />
        <path d="M-4 5L-6 8M4 5L6 8" stroke="#fff" strokeWidth="1.500" />
      </g>
    ))}
    <rect x="1778" y="792" width="24" height="24" rx="3" fill="#2b6ed2" />
    <rect x="1784" y="796" width="12" height="14" rx="3" fill="none" stroke="#fff" strokeWidth="2" />

    {labels.map((l) => (
      <HaloText
        key={`${l.t}-${l.x}-${l.y}`}
        transform={`translate(${l.x} ${l.y}) rotate(${l.r ?? 0})`}
        textAnchor={l.a ?? "start"}
        fill={l.c}
        $size={l.s}
        $weight={l.w}
      >
        {l.t}
      </HaloText>
    ))}

    {shields.map(([t, x, y]) => (
      <g key={`${t}-${x}`} transform={`translate(${x} ${y})`}>
        <path d="M-14-13H14V-2C14 8 6 11 0 14C-6 11-14 8-14-2Z" fill="#4576c0" />
        <Text y={5} textAnchor="middle" fill="#fff" $size={18} $weight={700}>{t}</Text>
      </g>
    ))}
    {routeSigns.map(([t, x, y]) => (
      <g key={`${t}-${x}`} transform={`translate(${x} ${y})`}>
        <rect x={t.length > 2 ? -22 : -19} y="-11" width={t.length > 2 ? 44 : 38} height="22" fill="#789b4f" />
        <Text y={6} textAnchor="middle" fill="#fff" $size={18} $weight={700}>{t}</Text>
      </g>
    ))}
    <path d="M2555 764L2570 771L2567 792H2543L2540 771Z" fill="#72664a" />
    <Text x={2555} y={785} textAnchor="middle" fill="#fff" $size={18} $weight={700}>2</Text>
    <path d="M2065 1139H2107Q2110 1139 2110 1142V1163L2086 1169L2062 1163V1142Q2062 1139 2065 1139Z" fill="#fff" stroke="#767676" strokeWidth="2" />
    <Text x={2086} y={1160} textAnchor="middle" fill="#333" $size={18}>Alt 1</Text>

    <PlacePin x={2220} y={578} fill="#5f92ee" edge="#3f74d8">
      <path d="M-12 12h5l4 12H8l4-9H-5" fill="none" stroke="#fff" strokeWidth="2.500" />
      <circle cx="-2" cy="30" r="2.500" fill="#fff" /><circle cx="8" cy="30" r="2.500" fill="#fff" />
    </PlacePin>
    <PlacePin x={2156} y={687} fill="#4db3c9" edge="#3a96ab">
      <path d="M-10 18L0 10L10 18ZM-8 20V30M8 20V30M-11 31H11M-4 28V21L0 25L4 21V28" fill="none" stroke="#fff" strokeWidth="2" />
    </PlacePin>
    <PlacePin x={2123} y={973} fill="#4db3c9" edge="#3a96ab">
      <ellipse cx="4" cy="20" rx="8" ry="10" fill="#fff" />
      <g fill="#4db3c9"><circle cx="2" cy="15" r="2" /><circle cx="7" cy="18" r="2" /><circle cx="1" cy="22" r="2" /><circle cx="6" cy="25" r="2" /></g>
    </PlacePin>
    <PlacePin x={1874} y={883} fill="#56a55d" edge="#3d8a45">
      <path d="M-10 16l6-2v6h-6zM4 16l8-4v10H2zM-12 24H12" fill="#fff" stroke="#fff" />
    </PlacePin>
    <PlacePin x={1996} y={985} fill="#4db3c9" edge="#3a96ab">
      <rect x="-9" y="13" width="18" height="11" fill="#fff" />
    </PlacePin>
    <PlacePin x={1511} y={1230} fill="#56a55d" edge="#3d8a45">
      <path d="M-8 14Q2 6 11 20ZM1 16L-7 30" fill="#fff" stroke="#fff" strokeWidth="2" />
      <circle cx="-11" cy="19" r="3" fill="#fff" />
    </PlacePin>
    <PlacePin x={2612} y={823} fill="#5f92ee" edge="#3f74d8">
      <rect x="-8" y="14" width="16" height="14" fill="#fff" />
    </PlacePin>
    <PlacePin x={1921} y={407} fill="#3f9a49" edge="#2f7d38" />
    <circle cx="1851" cy="1350" r="17" fill="#56a55d" />

    {pins.map(([kind, x, y, covered], i) => <StorePin key={i} kind={kind} x={x} y={y} covered={covered} />)}

    <GoogleText x={1518} y={1318}>
      <tspan fill="#4c86ee">G</tspan>
      <tspan fill="#dc5045">o</tspan>
      <tspan fill="#f3bd42">o</tspan>
      <tspan fill="#4c86ee">g</tspan>
      <tspan fill="#56a55d">l</tspan>
      <tspan fill="#dc5045">e</tspan>
    </GoogleText>
  </MapCanvas>
);

/* ---------- icons ---------- */

const Logo = () => (
  <svg width="62" height="62" viewBox="87 93 186 186" aria-hidden="true">
    <clipPath id="plate"><circle cx="180" cy="186" r="93" /></clipPath>
    <g clipPath="url(#plate)">
      <rect x="87" y="93" width="186" height="186" fill="#e6f6a8" />
      <path d="M80 156C100 146 120 144 138 156L133 149C155 154 166 156 165 166Q176 172 178 196Q180 172 191 166C189 154 205 152 222 150L216 157C236 144 256 144 280 156L280 200L240 242L180 240L110 240L80 200Z" fill="#fff" />
      <path d="M87 168C91 172 93 178 95 186Q104 236 166 237C160 214 145 200 124 184L108 172C150 186 176 214 173 282C110 280 80 230 87 168Z" fill="#e6f6a8" />
      <path d="M97 182L108 176L118 214Q102 206 97 182ZM118 186L130 200V222L120 214ZM134 202L144 214V230L136 226Z" fill="#e6f6a8" />
      <path d="M108 178L113 180L117 206L109 198ZM126 192L131 196L132 218L126 212ZM142 206L147 212V226L142 222Z" fill="#fff" />
      <path d="M176 282C170 236 196 192 242 172C216 196 198 214 194 238C246 236 258 214 263 176L272 164C280 236 236 284 176 282Z" fill="#9cba4a" />
      <path d="M252 168L257 172L256 196L248 206L246 190ZM236 188L242 184L242 208L234 218ZM222 204L228 198V218L221 226Z" fill="#9cba4a" />
      <path d="M174 282C172 260 173 244 178 232" fill="none" stroke="#fff" strokeWidth="4" />
    </g>
  </svg>
);

const Sun = () => (
  <svg width="40" height="40" viewBox="-20 -20 40 40" fill="none" stroke="#000" strokeWidth="2" aria-hidden="true">
    <circle r="9" />
    <path d="M0-20v8M0 12v8M-20 0h8M12 0h8M-14-14l6 5M14-14l-6 5M-14 14l6-5M14 14l-6-5" />
  </svg>
);

const HomeIcon = () => (
  <>
    <path d="M-67-15L0-66L67-15M-57-22V61H59V-22M-18 61V6H18V61" />
    <path d="M30-44V-53H43V-34" />
  </>
);

const FridgeIcon = () => (
  <>
    <rect x="-49" y="-69" width="98" height="129" rx="6" />
    <path d="M-49-19H49M-32-54V-30M-32-4V18M-40 61q0 8 7 8q7 0 7-8M26 61q0 8 7 8q7 0 7-8" />
  </>
);

const CalendarIcon = () => (
  <>
    <path d="M-40-58H-60q-4 0-4 4V59q0 4 4 4H60q4 0 4-4V-54q0-4-4-4H40M-29-58H29M-64-32H64" />
    <rect x="-40" y="-70" width="11" height="24" rx="4" />
    <rect x="29" y="-70" width="11" height="24" rx="4" />
    <path d="M-41-16H41V47H-41ZM-20-16V47M0-16V47M21-16V47M-41 5H41M-41 26H41" />
  </>
);

const CookbookIcon = () => (
  <>
    <path d="M52 37V-63H-36q-16 0-16 16V50M52 37H-36q-16 0-16 13q0 13 16 13H54" />
    <ellipse cx="22" cy="-32" rx="15" ry="11" transform="rotate(-45 22 -32)" />
    <path d="M12-22L-32 20M-8-20L-28-42q-6 12 6 26l8 8M6-4L38 20M2 0q6 8 10 2" />
  </>
);

const GroceryIcon = () => (
  <>
    <path d="M42 60q0 10-10 10H-58q-7 0-7-7V-63q0-7 7-7H14L42-42H20q-6 0-6-6V-70" />
    <circle cx="-38" cy="-34" r="8" /><circle cx="-38" cy="1" r="8" /><circle cx="-38" cy="37" r="8" />
    <path d="M-17-34H2M-17 1H-5M-17 37H-8" />
    <path d="M12-4H55L65 44q0 6-6 6H8q-6 0-6-6ZM18 6V-10q0-18 15-18t15 18V6" />
  </>
);

const MoodIcon = () => (
  <g strokeWidth="3.500">
    <g stroke="#e4e4e4" strokeWidth="2"><path d="M-72-72L-40-40M72-72L40-40M-72 70L-40 40M72 70L40 40" /></g>
    <g fill="#ddd" stroke="none"><path d="M-50-58l8 8l-8 8l-8-8zM50-58l8 8l-8 8l-8-8zM-50 42l8 8l-8 8l-8-8zM50 42l8 8l-8 8l-8-8z" /></g>
    <circle cy="-34" r="19" fill="#f9f9f9" /><circle cx="-45" cy="-12" r="19" fill="#f9f9f9" /><circle cx="46" cy="-12" r="19" fill="#f9f9f9" />
    <path d="M-7-28H7M-9-40h4M5-40h4M-53-2q8-8 16 0M-54-18l6 3M-36-18l-6 3M38-6q8 8 16 0M36-18h5M51-18h5" />
    <path d="M-44 47A44 44 0 0 1 44 47" />
    <path d="M-32 47A32 32 0 0 1 32 47" strokeDasharray="3 6" />
    <path d="M0 6V30" strokeDasharray="4 3" />
    <path d="M0 26L6 46q0 8-6 8t-6-8Z" fill="#000" stroke="none" />
  </g>
);

const GridIcon = () => (
  <>
    <rect x="-67" y="-66" width="60" height="59" rx="4" /><rect x="6" y="-66" width="60" height="59" rx="4" />
    <rect x="-67" y="6" width="60" height="59" rx="4" /><rect x="6" y="6" width="60" height="59" rx="4" />
  </>
);

const navItems = [
  { label: "Home", Icon: HomeIcon },
  { label: "Fridge", Icon: FridgeIcon },
  { label: "Meal plan", Icon: CalendarIcon },
  { label: "Recipes", Icon: CookbookIcon },
  { label: "Grocery list", Icon: GroceryIcon, active: true },
  { label: "Mood", Icon: MoodIcon },
  { label: "More", Icon: GridIcon },
];

const ingredients = [
  "1 pound boneless, skinless chicken breasts",
  "3/4 teaspoon kosher salt, divided, plus more for salad",
  "1 tablespoon olive oil, plus more for salad",
  "1/4 cup aioli or 1/4 cup mayo + 1 small garlic clove, grated",
  "Zest and juice of 1 lemon, plus more for salad",
  "Your favorite greens and fresh herbs, for salad",
];

const filters = [
  { label: "Supermarkets", color: "#f7bdb7" },
  { label: "Meat & Fish", color: "#b3f0b1" },
  { label: "Fruits & Veggies", color: "#b7c7f8" },
];

export default function App() {
  return (
    <>
      <GlobalStyle />
      <Header>
        <Brand href="#">
          <Logo />
          CleanPlate
        </Brand>
        <Nav aria-label="Main">
          {navItems.map(({ label, Icon, active }) => (
            <NavItem key={label} href="#" aria-label={label} $active={active}>
              <NavIcon viewBox="-72 -72 144 144" aria-hidden="true"><Icon /></NavIcon>
            </NavItem>
          ))}
        </Nav>
        <SignIn type="button">Sign In</SignIn>
      </Header>

      <Main>
        <Greeting>
          <GreetingTitle>Good Afternoon</GreetingTitle>
          <Sun />
        </Greeting>

        <Columns>
          <Card $pad="46px 80px">
            <CardTitle>Grocery List</CardTitle>
            <RecipeTitle>Zuni-Inspired Grilled Chicken Salad</RecipeTitle>
            <Ingredients>
              {ingredients.map((item) => <li key={item}>{item}</li>)}
            </Ingredients>
            <RemoveButton type="button">Remove from List</RemoveButton>
            <Rule />
          </Card>

          <Card $pad="26px 60px 52px">
            <CardTitle>Store Locations</CardTitle>
            <Filters>
              {filters.map((f) => (
                <Filter key={f.label} type="button" $color={f.color}>{f.label}</Filter>
              ))}
            </Filters>
            <MapFrame>
              <StoreMap />
              <MapControls $place="top">
                <MapButton type="button" aria-label="Toggle fullscreen view">
                  <svg width="36" height="36" viewBox="0 0 18 18" fill="#666"><path d="M0 0v6h2V2h4V0zM16 0h-4v2h4v4h2V0zM16 16h-4v2h6v-6h-2zM2 12H0v6h6v-2H2z" /></svg>
                </MapButton>
              </MapControls>
              <MapControls $place="bottom">
                <MapButton type="button" aria-label="Street View">
                  <svg width="36" height="60" viewBox="0 0 36 60" fill="#f5bf49" stroke="#80704a" strokeWidth="1.5">
                    <path d="M10 21H26Q29 21 30 26L34 41L30 43L27 36V59H19V46H17V59H9V36L6 43L2 41L6 26Q7 21 10 21Z" />
                    <path d="M11 21H25L18 32Z" fill="#dd8344" stroke="none" />
                    <circle cx="18" cy="11" r="10" />
                  </svg>
                </MapButton>
                <ZoomGroup>
                  <MapButton type="button" aria-label="Zoom in">
                    <svg width="36" height="36" viewBox="0 0 36 36" fill="#666"><path d="M14 0h8v14h14v8H22v14h-8V22H0v-8h14z" /></svg>
                  </MapButton>
                  <ZoomDivider />
                  <MapButton type="button" aria-label="Zoom out">
                    <svg width="36" height="36" viewBox="0 0 36 36" fill="#666"><path d="M0 14h36v8H0z" /></svg>
                  </MapButton>
                </ZoomGroup>
              </MapControls>
              <MapCredits>
                <button type="button">Keyboard shortcuts</button>
                <span>Map data ©2024 Google</span>
                <a href="#">Terms</a>
                <a href="#">Report a map error</a>
              </MapCredits>
            </MapFrame>
          </Card>
        </Columns>
      </Main>
      <BottomShade />
    </>
  );
}
